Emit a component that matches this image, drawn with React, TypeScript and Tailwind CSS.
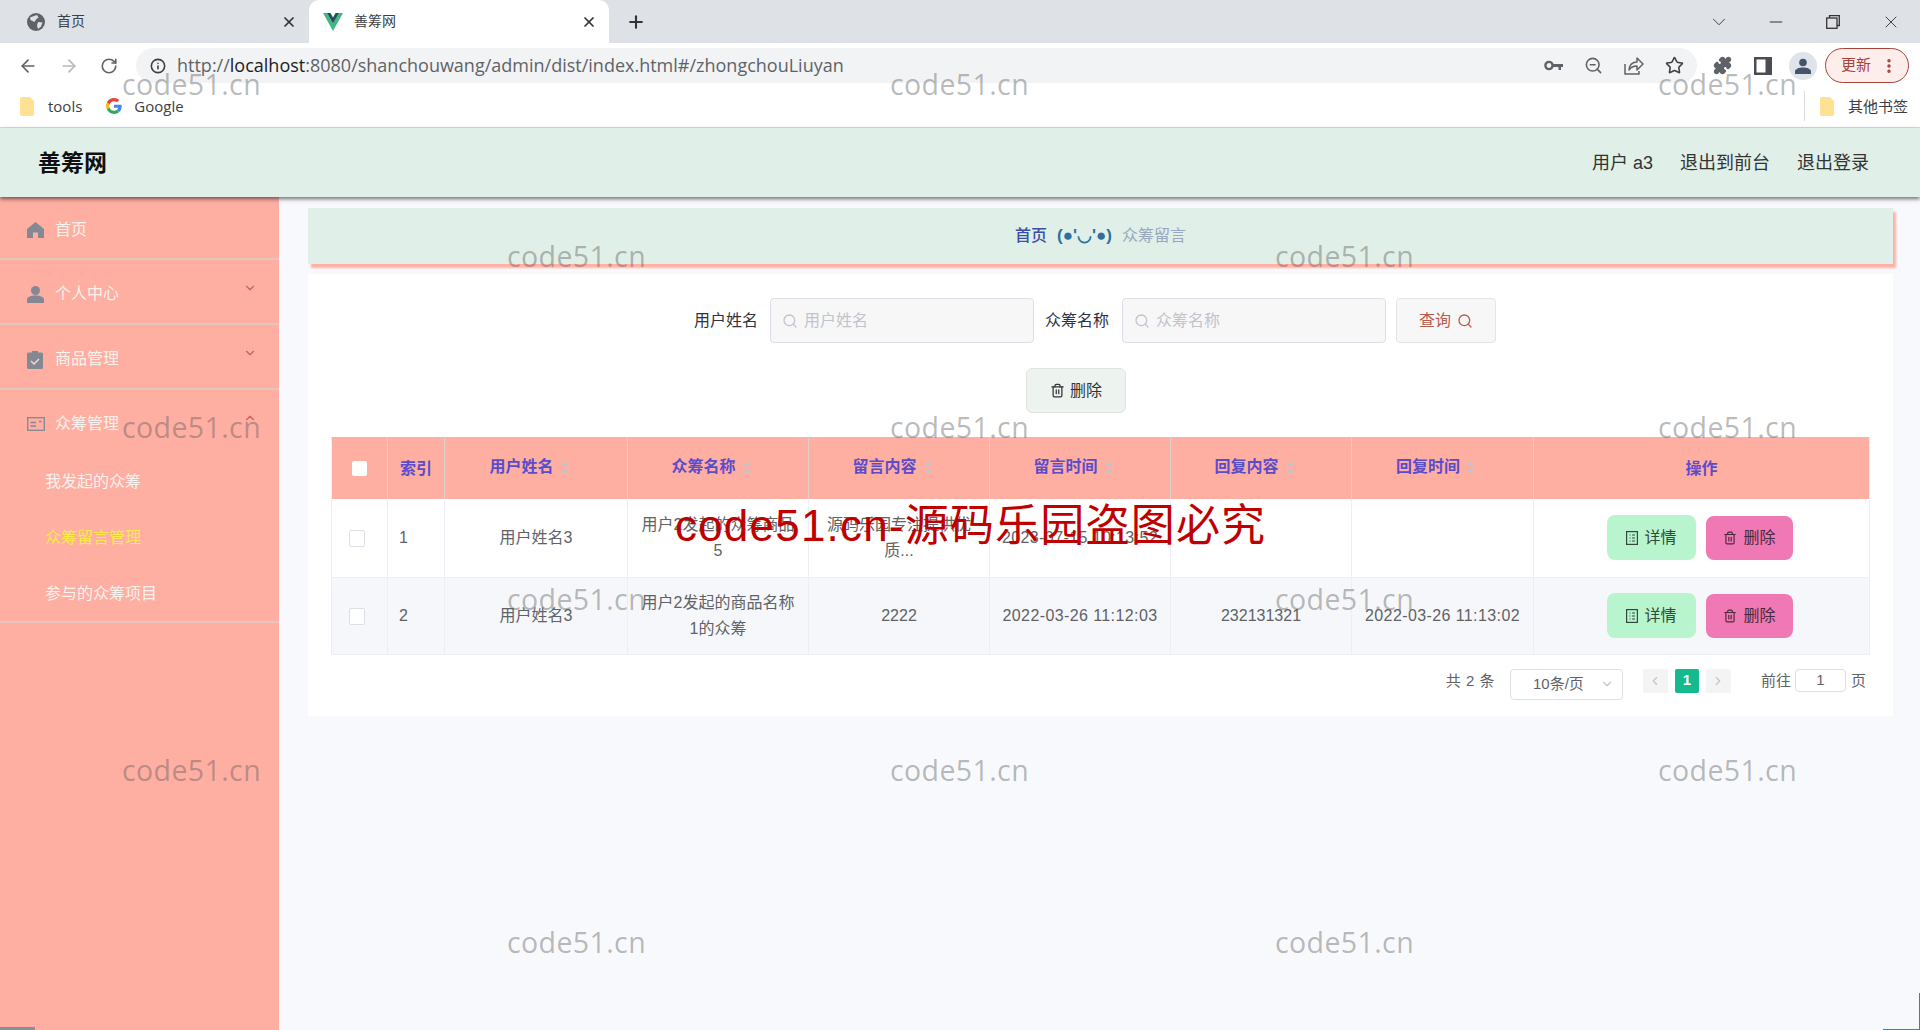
import React from "react";
import {
  ArrowLeft, ArrowRight, RotateCw, Info, ZoomOut, Star, Puzzle, MoreVertical,
  Plus, X, ChevronDown, ChevronUp, Minus, Search, Trash2, ChevronLeft, ChevronRight,
} from "lucide-react";

const cjk = "font-['Liberation_Sans','Noto_Sans_CJK_SC',sans-serif]";
const latin = "font-['Open_Sans','Noto_Sans_CJK_SC',sans-serif]";

const Marks = () => {
  const rows: [number, number[]][] = [
    [84, [122, 890, 1658]],
    [256, [507, 1275]],
    [427, [122, 890, 1658]],
    [599, [507, 1275]],
    [770, [122, 890, 1658]],
    [942, [507, 1275]],
  ];
  return (
    <>
      {rows.flatMap(([y, xs]) =>
        xs.map((x) => (
          <span
            key={`${x}-${y}`}
            className="absolute z-20 pointer-events-none font-['Open_Sans',sans-serif] text-[28.5px] leading-none tracking-[0.4px] text-[rgba(90,90,90,0.42)]"
            style={{ left: x, top: y - 14 }}
          >
            code51.cn
          </span>
        ))
      )}
    </>
  );
};

const GlobeIcon = () => (
  <svg width="18" height="18" viewBox="0 0 18 18">
    <circle cx="9" cy="9" r="9" fill="#5f6368" />
    <path d="M3 4.500 L7 3 L10 2 L11.500 4.500 L9 6.500 L7.500 9 L5.500 8 L3.500 7Z" fill="#dee1e6" />
    <path d="M11 9 L15.500 9.500 L14 13.500 L11 16 L10 12.500Z" fill="#dee1e6" />
  </svg>
);

const VueLogo = () => (
  <svg width="20" height="18" viewBox="0 0 20 18">
    <path d="M0 0 L10 18 L20 0 L16 0 L10 10.500 L4 0Z" fill="#41b883" />
    <path d="M4 0 L10 10.500 L16 0 L12.500 0 L10 4.500 L7.500 0Z" fill="#24505a" />
  </svg>
);

const GoogleG = () => (
  <svg width="16" height="16" viewBox="0 0 48 48">
    <path fill="#EA4335" d="M24 9.500c3.500 0 6.700 1.300 9.100 3.500l6.800-6.800C35.800 2.400 30.200 0 24 0 14.600 0 6.500 5.400 2.600 13.200l7.900 6.200C12.400 13.600 17.700 9.500 24 9.500z" />
    <path fill="#4285F4" d="M46.900 24.500c0-1.600-.1-3.100-.4-4.500H24v9h12.900c-.6 3-2.200 5.500-4.700 7.200l7.700 6c4.500-4.200 7-10.300 7-17.700z" />
    <path fill="#FBBC05" d="M10.500 28.600c-.5-1.400-.8-3-.8-4.600s.3-3.200.8-4.600l-7.900-6.200C.9 16.500 0 20.100 0 24s.9 7.500 2.600 10.800l7.900-6.200z" />
    <path fill="#34A853" d="M24 48c6.500 0 11.900-2.100 15.900-5.800l-7.700-6c-2.200 1.400-4.900 2.300-8.200 2.300-6.300 0-11.600-4.100-13.500-9.900l-7.900 6.200C6.500 42.600 14.600 48 24 48z" />
  </svg>
);

const Bookmark = () => (
  <svg width="15" height="19" viewBox="0 0 15 19">
    <path d="M2 0h8l4 4v13a2 2 0 0 1-2 2H2a2 2 0 0 1-2-2V2a2 2 0 0 1 2-2z" fill="#fde293" />
  </svg>
);

const KeyIcon = () => (
  <svg width="19" height="11" viewBox="0 0 19 11">
    <circle cx="5" cy="5.500" r="3.600" fill="none" stroke="#5f6368" strokeWidth="2.400" />
    <path d="M8.500 4H19v3h-2v3h-2.500V7H8.500z" fill="#5f6368" />
  </svg>
);

const ShareIcon = () => (
  <svg width="20" height="19" viewBox="0 0 20 19" fill="none" stroke="#5f6368" strokeWidth="1.500">
    <path d="M1 8v10h14v-3" />
    <path d="M5 14c0-5 3.500-8 8-8V2l6 6-6 6v-4c-3 0-6 1-8 4z" strokeLinejoin="round" />
  </svg>
);

const PanelIcon = () => (
  <svg width="18" height="18" viewBox="0 0 18 18">
    <rect width="18" height="18" fill="#4a4d52" />
    <rect x="2.500" y="2.500" width="9" height="13" fill="#fff" />
  </svg>
);

const AvatarIcon = () => (
  <svg width="16" height="16" viewBox="0 0 16 16" fill="#44546a">
    <circle cx="8" cy="4.500" r="3.800" />
    <path d="M0 16v-2.500C0 11 4 9.500 8 9.500s8 1.500 8 4V16z" />
  </svg>
);

const TicketIcon = ({ color }: { color: string }) => (
  <svg width="12" height="14" viewBox="0 0 12 14" fill="none" stroke={color} strokeWidth="1.200">
    <rect x="0.600" y="0.600" width="10.800" height="12.800" />
    <path d="M3.500 4h1M6 4h3M3.500 7h1M6 7h3M3.500 10h1M6 10h3" />
  </svg>
);

const HomeIcon = () => (
  <svg width="17" height="16" viewBox="0 0 17 16" fill="#848892">
    <path d="M8.500 0 L17 7 V16 H11 V10.500 H6 V16 H0 V7Z" />
  </svg>
);

const UserIcon = () => (
  <svg width="17" height="17" viewBox="0 0 17 17" fill="#848892">
    <circle cx="8.500" cy="4.500" r="4.500" />
    <path d="M0 17v-3c0-3 3-4.500 8.500-4.500S17 11 17 14v3z" />
  </svg>
);

const ClipIcon = () => (
  <svg width="16" height="19" viewBox="0 0 16 19">
    <path d="M1.500 2.500H5V1h6v1.500h3.500A1.500 1.500 0 0 1 16 4v13.500a1.500 1.500 0 0 1-1.500 1.500h-13A1.500 1.500 0 0 1 0 17.500V4a1.500 1.500 0 0 1 1.500-1.500z" fill="#848892" />
    <path d="M4 11l3 3 5-5" fill="none" stroke="#e9dcdc" strokeWidth="1.500" />
  </svg>
);

const PostcardIcon = () => (
  <svg width="18" height="14" viewBox="0 0 18 14" fill="none" stroke="#848892" strokeWidth="1.300">
    <rect x="0.700" y="0.700" width="16.600" height="12.600" />
    <path d="M3.500 5.500h5.500M3.500 9h5.500M12 4.500h2.500" />
  </svg>
);

const Tab = ({ active, title, icon }: { active?: boolean; title: string; icon: React.ReactNode }) => (
  <div className={`flex items-center h-[43px] w-[300px] pr-[12px] ${active ? "bg-white rounded-t-[10px] pl-[14px] gap-[11px]" : "pl-[17px] gap-[11px]"}`}>
    <span className="w-[20px] flex justify-center">{icon}</span>
    <span className="text-[14px] text-[#3c4043] flex-1">{title}</span>
    <X size={16} strokeWidth={2.6} className="text-[#333]" />
  </div>
);

const Chrome = () => (
  <div className={`shrink-0 ${cjk}`}>
    <div className="h-[43px] bg-[#dee1e6] flex items-center">
      <div className="w-[9px]" />
      <Tab title="首页" icon={<GlobeIcon />} />
      <Tab active title="善筹网" icon={<VueLogo />} />
      <Plus size={20} strokeWidth={2.5} className="ml-[17px] text-[#333]" />
      <div className="flex-1" />
      <ChevronDown size={22} strokeWidth={1} className="text-[#333] mr-[36px]" />
      <Minus size={20} strokeWidth={1.2} className="text-[#333] mr-[40px]" />
      <svg width="14" height="14" viewBox="0 0 14 14" className="mr-[41px]" fill="none" stroke="#333" strokeWidth="1.300">
        <rect x="0.700" y="3" width="10.300" height="10.300" />
        <path d="M3.500 3V0.700h9.800V10.500H11" />
      </svg>
      <X size={20} strokeWidth={1.1} className="text-[#333] mr-[19px]" />
    </div>
    <div className="h-[40px] bg-white flex items-start pt-[5px] relative">
      <div className="flex items-center gap-[21px] pl-[18px] h-[35px] w-[136px] text-[#5f6368]">
        <ArrowLeft size={20} strokeWidth={2} />
        <ArrowRight size={20} strokeWidth={2} className="text-[#b6b8bb]" />
        <RotateCw size={18} strokeWidth={2.2} />
      </div>
      <div className="w-[1561px] h-[35px] rounded-full bg-[#f1f3f4] flex items-center pl-[14px] pr-[13px]">
        <Info size={16} strokeWidth={2.4} className="text-[#3c4043] mr-[11px]" />
        <span className={`text-[18px] text-[#5f6368] ${latin}`}>
          http://<span className="text-[#202124]">localhost</span>:8080/shanchouwang/admin/dist/index.html#/zhongchouLiuyan
        </span>
        <div className="flex-1" />
        <div className="flex items-center gap-[21px] text-[#5f6368]">
          <KeyIcon />
          <ZoomOut size={19} />
          <ShareIcon />
          <Star size={19} className="text-[#3c4043]" />
        </div>
      </div>
      <div className="flex items-center h-[35px] ml-[16px] text-[#5f6368]">
        <Puzzle size={19} fill="#5f6368" />
        <span className="ml-[22px]"><PanelIcon /></span>
        <div className="ml-[17px] w-[28px] h-[28px] rounded-full bg-[#dfe3ea] flex items-center justify-center">
          <AvatarIcon />
        </div>
      </div>
      <div className="ml-[8px] w-[84px] h-[35px] rounded-full border-[1.5px] border-[#a8423a] bg-[#fdeeec] flex items-center pl-[15px] text-[15px] text-[#a8423a]">
        更新
        <MoreVertical size={18} strokeWidth={2.6} className="ml-[9px]" />
      </div>
    </div>
    <div className={`h-[45px] bg-white border-b border-[#dadfdc] flex items-center text-[15px] text-[#3c4043] pt-[2px] ${latin}`}>
      <div className="pl-[20px] flex items-center gap-[13px]">
        <Bookmark />
        <span className="mr-[24px]">tools</span>
      </div>
      <div className="flex items-center gap-[12px]">
        <GoogleG />
        <span>Google</span>
      </div>
      <div className="flex-1" />
      <div className="h-[30px] border-l border-[#dadce0] pl-[15px] flex items-center gap-[13px] pr-[12px]">
        <Bookmark />
        <span>其他书签</span>
      </div>
    </div>
  </div>
);

const Sep = () => <div className="h-[2px] bg-[#e6c5bd]" />;

const MenuItem = ({ icon, label, arrow, h }: { icon: React.ReactNode; label: string; arrow?: "down" | "up"; h: string }) => (
  <div className={`${h} flex items-center pl-[27px] pr-[22px] pt-[5px]`}>
    <span className="w-[28px] flex items-center">{icon}</span>
    <span className="text-[16px] text-[#f8f2ef]">{label}</span>
    <div className="flex-1" />
    {arrow === "down" && <ChevronDown size={14} className="text-[#c9605a] -mt-[12px]" />}
    {arrow === "up" && <ChevronUp size={14} className="text-[#c9605a] -mt-[12px]" />}
  </div>
);

const Sidebar = () => (
  <aside className="w-[279px] shrink-0 bg-[#ffaea2] flex flex-col">
    <MenuItem h="h-[61px]" icon={<HomeIcon />} label="首页" />
    <Sep />
    <MenuItem h="h-[63px]" icon={<UserIcon />} label="个人中心" arrow="down" />
    <Sep />
    <MenuItem h="h-[63px]" icon={<ClipIcon />} label="商品管理" arrow="down" />
    <Sep />
    <MenuItem h="h-[63px]" icon={<PostcardIcon />} label="众筹管理" arrow="up" />
    <div className="h-[56px] flex items-center pl-[45px] text-[16px] text-[#f8f2ef] mt-[1px]">我发起的众筹</div>
    <div className="h-[56px] flex items-center pl-[45px] text-[16px] text-[#fde94f]">众筹留言管理</div>
    <div className="h-[56px] flex items-center pl-[45px] text-[16px] text-[#f8f2ef]">参与的众筹项目</div>
    <div className="h-[2px] -mt-[1px] bg-[#e6c5bd]" />
  </aside>
);

const SearchField = ({ label, labelCls, inputCls }: { label: string; labelCls: string; inputCls: string }) => (
  <>
    <span className={`text-[16px] text-[#2f3242] w-[64px] ${labelCls}`}>{label}</span>
    <div className={`w-[264px] h-[45px] rounded-[4px] border border-[#dcdfe6] bg-[#f7f7f7] flex items-center pl-[11px] gap-[6px] text-[#c0c4cc] ${inputCls}`}>
      <Search size={16} />
      <span className="text-[16px]">{label}</span>
    </div>
  </>
);

const Sort = () => (
  <span className="inline-flex flex-col ml-[7px] gap-[3px] align-middle">
    <span className="w-0 h-0 border-x-[4px] border-x-transparent border-b-[5px] border-b-[#c0c4cc]" />
    <span className="w-0 h-0 border-x-[4px] border-x-transparent border-t-[5px] border-t-[#c0c4cc]" />
  </span>
);

const Th = ({ children, sort, w }: { children: React.ReactNode; sort?: boolean; w: string }) => (
  <th className={`${w} border-r border-[#e0cfc9] last:border-r-0 font-bold text-[16px] text-[#5b4ccb] text-center`}>
    <span className={sort ? "relative -left-[7px] -top-[1px]" : "relative top-[1px]"}>
      {children}
      {sort && <Sort />}
    </span>
  </th>
);

const Td = ({ children }: { children?: React.ReactNode }) => (
  <td className="border-r border-b border-[#ebeef5] last:border-r-0 text-center text-[16px] leading-[26px] text-[#606266]">{children}</td>
);

const Time = ({ children }: { children: string }) => <span className="tracking-[0.4px]">{children}</span>;

const Actions = () => (
  <div className="flex justify-center items-center gap-[10px] pr-[3px]">
    <button className="w-[89px] h-[45px] rounded-[8px] bg-[#b8f5cf] flex items-center justify-center gap-[6px] text-[16px] text-[#2f4a3a]">
      <TicketIcon color="#2f4a3a" />详情
    </button>
    <button className="w-[87px] h-[44px] rounded-[8px] bg-[#f078b4] flex items-center justify-center gap-[6px] text-[16px] text-[#4a2a3a]">
      <Trash2 size={14} />删除
    </button>
  </div>
);

const Check = () => <span className="inline-block w-[16px] h-[17px] rounded-[2px] bg-white border border-[#dcdfe6]" />;

const Row = ({ cells, h, alt }: { cells: React.ReactNode[]; h: string; alt?: boolean }) => (
  <tr className={`${h} ${alt ? "bg-[#f5f7fb]" : "bg-white"}`}>
    <Td><span className="relative -left-[3px] top-[4px]"><Check /></span></Td>
    {cells.map((c, i) => (i === 0 ? (
      <td key={i} className="border-r border-b border-[#ebeef5] pl-[11px] text-[16px] text-[#606266]">{c}</td>
    ) : <Td key={i}>{c}</Td>))}
    <Td><Actions /></Td>
  </tr>
);

const Main = () => (
  <main className="flex-1 bg-[#f8f9fc] pl-[29px] pr-[27px] pt-[11px] min-w-0">
    <div className="h-[56px] bg-[#e0efe7] shadow-[3px_4px_2px_#ffb0a5] flex items-center justify-center relative z-10">
      <span className="text-[16px] font-medium text-[#3b4fa8]">首页</span>
      <span className="text-[17px] text-[#2f6f9f] font-bold ml-[10px]">(●'◡'●)</span>
      <span className="text-[16px] text-[#97a8be] ml-[10px]">众筹留言</span>
    </div>
    <section className="mt-[10px] h-[442px] bg-white pt-[24px] pl-[23px] pr-[24px]">
      <div className="flex items-center h-[45px] pl-[363px]">
        <SearchField label="用户姓名" labelCls="" inputCls="ml-[12px]" />
        <SearchField label="众筹名称" labelCls="ml-[11px]" inputCls="ml-[13px]" />
        <button className="w-[100px] h-[45px] ml-[10px] rounded-[4px] border border-[#e4e4e4] bg-[#f8f7f7] flex items-center justify-center gap-[6px] text-[16px] text-[#b85c50]">
          查询<Search size={16} />
        </button>
      </div>
      <div className="flex justify-center mt-[25px] pr-[48px]">
        <button className="w-[100px] h-[45px] rounded-[6px] border border-[#dfe6e1] bg-[#edf3ee] flex items-center justify-center gap-[5px] text-[16px] text-[#333]">
          <Trash2 size={15} />删除
        </button>
      </div>
      <table className="mt-[24px] w-[1538px] table-fixed border-collapse border-l border-r border-[#ebeef5]">
        <thead>
          <tr className="h-[62px] bg-[#ffaea2]">
            <th className="w-[56px] border-r border-[#e0cfc9]"><span className="inline-block w-[15px] h-[15px] rounded-[2px] bg-white align-middle" /></th>
            <Th w="w-[57px]">索引</Th>
            <Th w="w-[183px]" sort>用户姓名</Th>
            <Th w="w-[181px]" sort>众筹名称</Th>
            <Th w="w-[181px]" sort>留言内容</Th>
            <Th w="w-[181px]" sort>留言时间</Th>
            <Th w="w-[181px]" sort>回复内容</Th>
            <Th w="w-[182px]" sort>回复时间</Th>
            <Th w="w-[336px]">操作</Th>
          </tr>
        </thead>
        <tbody>
          <Row
            h="h-[78px]"
            cells={["1", "用户姓名3", <>用户2发起的众筹商品<br />5</>, <>源码乐园专注提供优<br />质...</>, <Time>2023-07-15 10:13:52</Time>, "", ""]}
          />
          <Row
            h="h-[77px]"
            alt
            cells={["2", "用户姓名3", <>用户2发起的商品名称<br />1的众筹</>, "2222", <Time>2022-03-26 11:12:03</Time>, "232131321", <Time>2022-03-26 11:13:02</Time>]}
          />
        </tbody>
      </table>
      <div className="flex items-start justify-end mt-[14px] pr-[3px] text-[15px] text-[#606266]">
        <span className="mr-[15px] mt-[1px] tracking-[0.5px]">共 2 条</span>
        <div className="w-[113px] h-[31px] mr-[20px] rounded-[4px] border border-[#dcdfe6] flex items-center pl-[22px] pr-[8px]">
          <span className="flex-1">10条/页</span>
          <ChevronDown size={14} className="text-[#c0c4cc]" />
        </div>
        <span className="w-[25px] h-[24px] bg-[#f4f4f5] rounded-[2px] flex items-center justify-center text-[#c0c4cc]"><ChevronLeft size={14} /></span>
        <span className="w-[24px] h-[24px] ml-[7px] bg-[#15b98e] rounded-[2px] flex items-center justify-center text-white font-bold text-[15px]">1</span>
        <span className="w-[25px] h-[24px] ml-[7px] mr-[30px] bg-[#f4f4f5] rounded-[2px] flex items-center justify-center text-[#c0c4cc]"><ChevronRight size={14} /></span>
        <span className="mt-[1px] mr-[4px]">前往</span>
        <span className="w-[51px] h-[23px] rounded-[4px] border border-[#dcdfe6] flex items-center justify-center mr-[5px]">1</span>
        <span className="mt-[1px]">页</span>
      </div>
    </section>
  </main>
);

export default function App() {
  return (
    <div className={`relative w-[1920px] h-[1030px] overflow-hidden flex flex-col bg-white ${cjk}`}>
      <Chrome />
      <header className="h-[69px] shrink-0 bg-[#e0efe7] shadow-[0_2px_4px_rgba(0,0,0,0.55)] relative z-10 flex items-center pl-[38px] pr-[51px]">
        <span className="text-[23px] font-bold text-[#111] pt-[1px]">善筹网</span>
        <div className="flex-1" />
        <div className="flex items-center gap-[27px] text-[18px] text-[#333] pt-[2px]">
          <span>用户 a3</span>
          <span>退出到前台</span>
          <span>退出登录</span>
        </div>
      </header>
      <div className="flex flex-1 min-h-0">
        <Sidebar />
        <Main />
      </div>
      <Marks />
      <div className="absolute z-30 left-[675px] top-[498px] whitespace-nowrap text-[44px] leading-[56px] tracking-[1.2px] text-[#c00000] pointer-events-none">
        code51.cn-源码乐园盗图必究
      </div>
      <div className="absolute left-0 bottom-0 w-[35px] h-[3px] bg-[#8a8f9c]" />
      <div className="absolute right-0 bottom-0 w-[37px] h-[1px] bg-[#2c8a9c]" />
      <div className="absolute right-0 bottom-0 w-[1px] h-[37px] bg-[#2c8a9c]" />
    </div>
  );
}
